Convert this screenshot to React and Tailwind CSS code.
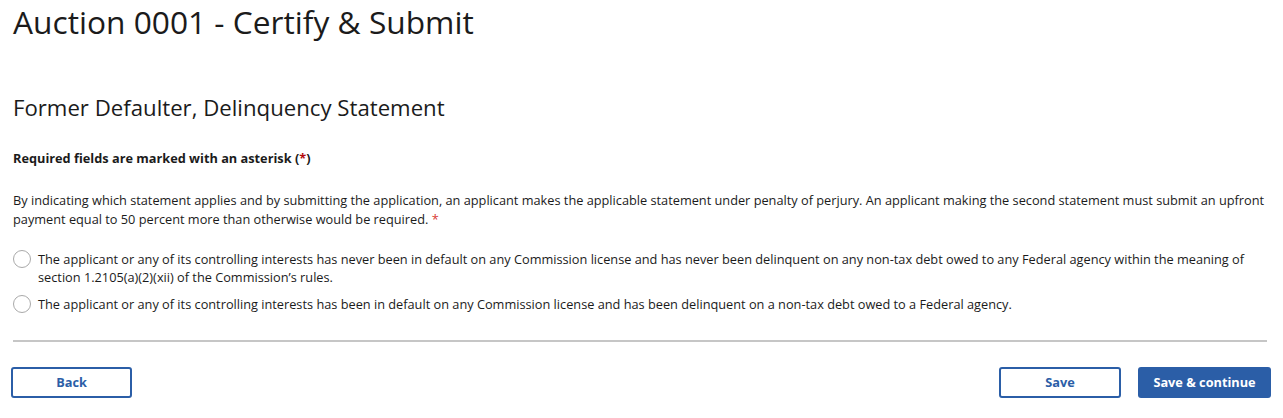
export default function App() {
  const font = { fontFamily: '"Open Sans", "Liberation Sans", sans-serif' };
  return (
    <div className="bg-white w-[1283px] h-[418px] px-[13px] text-[#1b1b1b] overflow-hidden" style={font}>
      <h1 className="text-[31.7px] leading-[44px] font-normal text-[#1b1b1b]">Auction 0001 - Certify &amp; Submit</h1>
      <h2 className="text-[22.2px] leading-[30px] mt-[49px] font-normal">Former Defaulter, Delinquency Statement</h2>
      <p className="text-[12.75px] font-bold mt-[26px] leading-[18px]">
        Required fields are marked with an asterisk (<span className="text-[#b50909]">*</span>)
      </p>
      <p className="text-[12.75px] mt-[24px] leading-[19px] text-[#1b1b1b]">
        By indicating which statement applies and by submitting the application, an applicant makes the applicable statement under penalty of perjury. An applicant making the second statement must submit an upfront payment equal to 50 percent more than otherwise would be required. <span className="text-[#d83933]">*</span>
      </p>
      <div className="mt-[21px] flex flex-col gap-[9px]">
        <label className="flex items-start gap-[7px] text-[12.75px] leading-[18px]">
          <span className="w-[18px] h-[18px] rounded-full border-[1.5px] border-[#a9a9a9] shrink-0"></span>
          <span>The applicant or any of its controlling interests has never been in default on any Commission license and has never been delinquent on any non-tax debt owed to any Federal agency within the meaning of section 1.2105(a)(2)(xii) of the Commission’s rules.</span>
        </label>
        <label className="flex items-start gap-[7px] text-[12.75px] leading-[18px]">
          <span className="w-[18px] h-[18px] rounded-full border-[1.5px] border-[#a9a9a9] shrink-0"></span>
          <span>The applicant or any of its controlling interests has been in default on any Commission license and has been delinquent on a non-tax debt owed to a Federal agency.</span>
        </label>
      </div>
      <hr className="mt-[27px] border-0 border-t-2 border-[#c6c6c6] mr-[3px]" />
      <div className="flex justify-between mt-[25px]">
        <button className="w-[121px] h-[31px] -ml-[2px] rounded-[3px] border-2 border-[#2b5ea7] text-[#2b5ea7] text-[12.75px] font-bold bg-white">Back</button>
        <div className="flex gap-[17px] -mr-[1px]">
          <button className="w-[122px] h-[31px] rounded-[3px] border-2 border-[#2b5ea7] text-[#2b5ea7] text-[12.75px] font-bold bg-white">Save</button>
          <button className="w-[133px] h-[31px] rounded-[3px] bg-[#2b5ea7] text-white text-[12.75px] font-bold">Save &amp; continue</button>
        </div>
      </div>
    </div>
  );
}
